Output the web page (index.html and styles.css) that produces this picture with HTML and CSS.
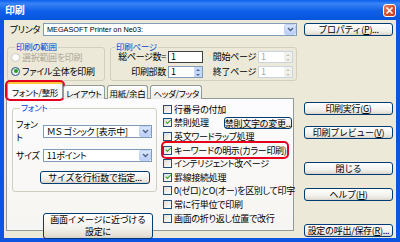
FILE: index.html
```html
<!DOCTYPE html>
<html lang="ja">

<head>
    <meta charset="utf-8">
    <link rel="stylesheet" href="styles.css">
</head>

<body>
    <div class="window">
        <div class="titlebar">
            <span class="title">印刷</span>
            <span class="close">
                <svg width="11" height="11" viewBox="0 0 11 11"><path d="M2.5 2.5l6 6M8.5 2.5l-6 6" stroke="#fff" stroke-width="1.7" /></svg>
            </span>
        </div>

        <div class="client">
            <div class="main">
                <div class="printer-row">
                    <span class="printer-label">プリンタ</span>
                    <div class="combo printer-combo">
                        <span class="combo-text latin">MEGASOFT Printer on Ne03:</span>
                        <span class="drop"><svg width="7" height="5" viewBox="0 0 7 5"><path d="M1 1l2.5 2.5L6 1" fill="none" stroke="#4d6185" stroke-width="1.4" /></svg></span>
                    </div>
                </div>

                <div class="groups">
                    <div class="group range">
                        <span class="group-title">印刷の範囲</span>
                        <div class="radio disabled"><span class="dot"></span>選択範囲を印刷</div>
                        <div class="radio"><span class="dot on"></span>ファイル全体を印刷</div>
                    </div>
                    <div class="group pages">
                        <span class="group-title">印刷ページ</span>
                        <div class="page-grid">
                            <span class="field-label">総ページ数=</span>
                            <span class="edit dark">1</span>
                            <span class="field-label">開始ページ</span>
                            <span class="edit off">1<span class="spinner"><i class="up"></i><i class="down"></i></span></span>
                            <span class="field-label">印刷部数</span>
                            <span class="edit">1<span class="spinner on"><i class="up"></i><i class="down"></i></span></span>
                            <span class="field-label">終了ページ</span>
                            <span class="edit off">1<span class="spinner"><i class="up"></i><i class="down"></i></span></span>
                        </div>
                    </div>
                </div>

                <div class="tabs">
                    <span class="tab active marked">フォント/整形</span>
                    <span class="tab">レイアウト</span>
                    <span class="tab gap">用紙/余白</span>
                    <span class="tab gap">ヘッダ/フッタ</span>
                </div>

                <div class="panel">
                    <div class="panel-left">
                        <div class="group font">
                            <span class="group-title">フォント</span>
                            <div class="font-row">
                                <span class="font-label">フォント</span>
                                <div class="combo font-combo">
                                    <span class="combo-text">ＭＳ ゴシック [表示中]</span>
                                    <span class="drop"><svg width="7" height="5" viewBox="0 0 7 5"><path d="M1 1l2.5 2.5L6 1" fill="none" stroke="#4d6185" stroke-width="1.4" /></svg></span>
                                </div>
                            </div>
                            <div class="font-row">
                                <span class="font-label">サイズ</span>
                                <div class="combo font-combo">
                                    <span class="combo-text">11ポイント</span>
                                    <span class="drop"><svg width="7" height="5" viewBox="0 0 7 5"><path d="M1 1l2.5 2.5L6 1" fill="none" stroke="#4d6185" stroke-width="1.4" /></svg></span>
                                </div>
                            </div>
                            <button class="btn size-btn">サイズを行桁数で指定...</button>
                        </div>
                        <button class="btn tall-btn">画面イメージに近づける<br>設定に</button>
                    </div>

                    <div class="checks">
                        <div class="check"><span class="box"></span>行番号の付加</div>
                        <div class="check"><span class="box on"></span>禁則処理<button class="btn kinsoku-btn">禁則文字の変更...</button></div>
                        <div class="check"><span class="box"></span>英文ワードラップ処理</div>
                        <div class="check marked"><span class="box on"></span>キーワードの明示(カラー印刷)</div>
                        <div class="check"><span class="box"></span>インテリジェント改ページ</div>
                        <div class="check"><span class="box on"></span>罫線接続処理</div>
                        <div class="check"><span class="box"></span>0(ゼロ)とO(オー)を区別して印字</div>
                        <div class="check"><span class="box"></span>常に行単位で印刷</div>
                        <div class="check"><span class="box"></span>画面の折り返し位置で改行</div>
                    </div>
                </div>
            </div>

            <div class="side">
                <button class="btn prop-btn">プロパティ(<u>P</u>)...</button>
                <button class="btn exec-btn">印刷実行(<u>G</u>)</button>
                <button class="btn preview-btn">印刷プレビュー(<u>V</u>)</button>
                <button class="btn close-btn">閉じる</button>
                <button class="btn help-btn">ヘルプ(<u>H</u>)</button>
                <button class="btn save-btn">設定の呼出/保存(<u>R</u>)...</button>
            </div>
        </div>
    </div>
</body>

</html>
```

FILE: styles.css
```css
body {
    margin: 0;
    background: #ece9d8;
    font-family: 'Noto Sans CJK JP', sans-serif;
    font-size: 9px;
    letter-spacing: -0.3px;
    font-feature-settings: "palt";
    color: #000;
}

.window {
    width: 400px;
    height: 242px;
    display: flex;
    flex-direction: column;
}

.titlebar {
    height: 20px;
    flex: none;
    display: flex;
    align-items: center;
    justify-content: space-between;
    padding: 0 4px 0 5px;
    background: linear-gradient(#0a5fef, #3a83f6 18%, #0f60e8 55%, #0655dc);
}

.title {
    color: #fff;
    font-weight: bold;
    font-size: 10px;
    line-height: 12px;
}

.close {
    width: 13px;
    height: 13px;
    box-sizing: border-box;
    display: flex;
    align-items: center;
    justify-content: center;
    border: 1px solid #fff;
    border-radius: 3px;
    background: linear-gradient(135deg, #e8866a, #d3532d 50%, #c23e1a);
}

.client {
    flex: 1;
    display: flex;
    gap: 7px;
    padding: 0 3px 0 2px;
    border: 4px solid #0d55e0;
    border-top: 0;
    background: #ece9d8;
}

.main {
    width: 291px;
    padding-top: 3px;
    display: flex;
    flex-direction: column;
}

.side {
    width: 89px;
    padding-top: 3px;
    display: flex;
    flex-direction: column;
}

/* printer */
.printer-row {
    display: flex;
    height: 13px;
}

.printer-label {
    width: 37px;
    padding-right: 3px;
    box-sizing: border-box;
    text-align: right;
    line-height: 13px;
}

.combo {
    height: 13px;
    box-sizing: border-box;
    display: flex;
    align-items: center;
    border: 1px solid #7f9db9;
    background: #fff;
}

.printer-combo {
    flex: 1;
}

.combo-text {
    padding-left: 3px;
    line-height: 11px;
    white-space: nowrap;
}

.combo-text.latin {
    font-family: 'Liberation Sans', sans-serif;
    font-size: 7.3px;
    letter-spacing: 0;
}

.drop {
    margin-left: auto;
    width: 12px;
    height: 11px;
    box-sizing: border-box;
    display: flex;
    align-items: center;
    justify-content: center;
    border: 1px solid #bcd0f8;
    border-radius: 2px;
    background: linear-gradient(#dbe6fd, #bccff9);
}

/* group boxes */
.group {
    box-sizing: border-box;
    border: 1px solid #d0d0bf;
    border-radius: 3px;
}

.group-title {
    display: block;
    width: fit-content;
    margin: -6px 0 1px 4px;
    padding: 0 1px;
    font-size: 8.5px;
    line-height: 8px;
    color: #0046d5;
    background: #ece9d8;
}

.groups {
    display: flex;
    margin-top: 11px;
}

.range {
    width: 98px;
    margin-left: 1px;
    padding: 0 0 3px 3px;
}

.pages {
    width: 187px;
    margin-left: 5px;
    padding-bottom: 2px;
}

.radio {
    display: flex;
    align-items: center;
    height: 12px;
}

.radio + .radio {
    margin-top: 2px;
}

.radio.disabled {
    color: #aca899;
}

.dot {
    width: 9px;
    height: 9px;
    box-sizing: border-box;
    margin-right: 2px;
    border: 1px solid #1c5180;
    border-radius: 50%;
    background: linear-gradient(135deg, #dcdcd7, #fff);
    display: flex;
    align-items: center;
    justify-content: center;
}

.disabled .dot {
    border-color: #cac8bb;
    background: #fff;
}

.dot.on::after {
    content: "";
    width: 4px;
    height: 4px;
    border-radius: 50%;
    background: #21a121;
}

.page-grid {
    display: grid;
    grid-template-columns: 57px 35px 55px 35px;
    grid-auto-rows: 12px;
    row-gap: 3px;
    margin-top: 1px;
}

.field-label {
    text-align: right;
    padding-right: 2px;
    line-height: 12px;
    white-space: nowrap;
}

.edit {
    display: flex;
    align-items: center;
    box-sizing: border-box;
    padding-left: 2px;
    border: 1px solid #7f9db9;
    background: #fff;
    font-size: 9px;
    line-height: 10px;
}

.edit.dark {
    border-color: #404040;
}

.edit.off {
    color: #aca899;
    border-color: #c9d4e0;
}

.spinner {
    margin-left: auto;
    width: 8px;
    height: 10px;
    display: flex;
    flex-direction: column;
    background: #f1f0ea;
}

.spinner.on {
    background: #c7d6fb;
}

.spinner i {
    flex: 1;
    display: flex;
    align-items: center;
    justify-content: center;
}

.spinner i::after {
    content: "";
    border-left: 2px solid transparent;
    border-right: 2px solid transparent;
}

.spinner .up::after {
    border-bottom: 2px solid #c9c7ba;
}

.spinner .down::after {
    border-top: 2px solid #c9c7ba;
}

.spinner.on .up::after {
    border-bottom-color: #4d6185;
}

.spinner.on .down::after {
    border-top-color: #4d6185;
}

/* tabs */
.tabs {
    display: flex;
    align-items: flex-end;
    height: 17px;
    margin-top: 1px;
    padding-left: 1px;
    margin-bottom: -1px;
    position: relative;
    z-index: 1;
}

.tab {
    height: 14px;
    box-sizing: border-box;
    display: flex;
    align-items: center;
    justify-content: center;
    padding: 0 2px;
    border: 1px solid #919b9c;
    border-bottom: 0;
    border-radius: 3px 3px 0 0;
    background: linear-gradient(#fff, #ecebe6);
    font-size: 8.5px;
    white-space: nowrap;
}

.tab.active {
    min-width: 56px;
    height: 17px;
    border-top: 2px solid #ffc83c;
    background: #fcfcfe;
}

.tab.gap {
    margin-left: 2px;
}

.marked {
    outline: 2px solid #e6001f;
    outline-offset: 0;
    border-radius: 3px;
}

.panel {
    width: 288px;
    height: 133px;
    box-sizing: border-box;
    display: flex;
    gap: 6px;
    padding: 9px 0 0 5px;
    border: 1px solid #919b9c;
    background: linear-gradient(#fcfcfe, #f6f5f1);
}

.panel-left {
    width: 145px;
    display: flex;
    flex-direction: column;
}

.font {
    padding: 0 4px 7px 3px;
}

.font .group-title {
    background: #fcfcfe;
}

.font-row {
    display: flex;
    align-items: center;
    margin-top: 5px;
}

.font .group-title + .font-row {
    margin-top: 7px;
}

.font-label {
    width: 27px;
}

.font-combo {
    width: 110px;
}

/* buttons */
.btn {
    height: 13px;
    margin: 0;
    padding: 0;
    box-sizing: border-box;
    border: 1px solid #003c74;
    border-radius: 3px;
    background: linear-gradient(#fff, #f2f1ec 60%, #e3e0d6 90%, #d6d0c5);
    font-family: inherit;
    font-size: 9px;
    letter-spacing: -0.3px;
    line-height: 11px;
    color: #000;
    white-space: nowrap;
}

.size-btn {
    width: 110px;
    margin: 9px 0 0 24px;
}

.tall-btn {
    width: 110px;
    height: 26px;
    margin: 21px 0 0 31px;
    line-height: 12px;
}

.kinsoku-btn {
    width: 68px;
    height: 12px;
    margin-left: 15px;
}

.exec-btn {
    margin-top: 66px;
}

.preview-btn {
    margin-top: 11px;
}

.close-btn {
    margin-top: 23px;
}

.help-btn {
    margin-top: 13px;
}

.save-btn {
    margin-top: 23px;
}

/* check list */
.checks {
    display: flex;
    flex-direction: column;
    margin-top: -5.5px;
}

.check {
    display: flex;
    align-items: center;
    height: 13.6px;
    width: fit-content;
    white-space: nowrap;
}

.box {
    width: 9px;
    height: 9px;
    box-sizing: border-box;
    margin-right: 2px;
    border: 1px solid #1c5180;
    background: linear-gradient(135deg, #dcdcd7, #fff);
    position: relative;
}

.box.on::after {
    content: "";
    position: absolute;
    left: 1px;
    top: 0;
    width: 4px;
    height: 2px;
    border-left: 1.5px solid #21a121;
    border-bottom: 1.5px solid #21a121;
    transform: rotate(-45deg) translate(0, 1px);
}
```
